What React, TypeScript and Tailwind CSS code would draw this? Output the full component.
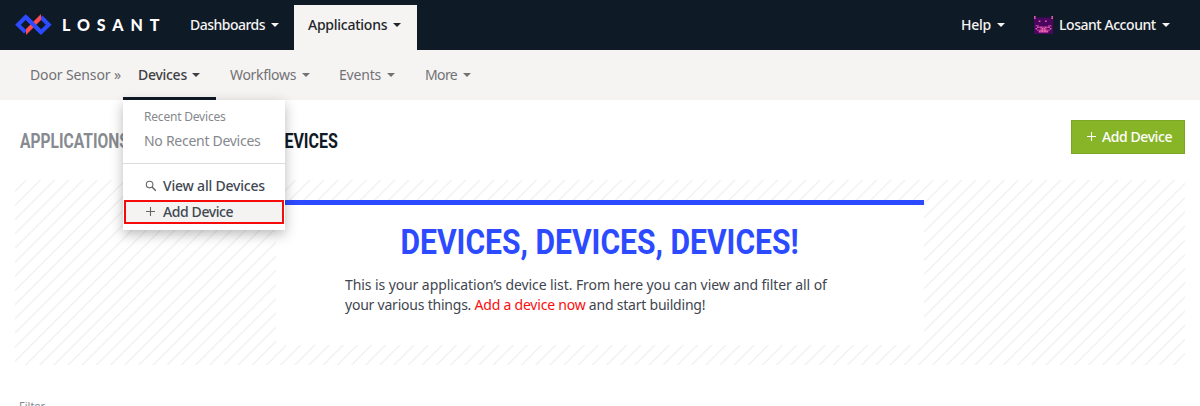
import type { ReactNode } from "react";

const PIXELS = [
  "p..........p",
  "pddddddddddp",
  "dddddddddddd",
  "dddpdddpdddd",
  "dddddddddddd",
  "dddddddddddd",
  "dmmddddddmmd",
  "ddpmpmmpmpdd",
  "dpddmppmddpd",
  "ddmmppppmmdd",
  "dddppppppddd",
  "dddddddddddd",
];

const FILL: Record<string, string> = { d: "#4b0660", p: "#ee62b0", m: "#b9389a" };

function Avatar() {
  return (
    <svg width="19" height="18" viewBox="0 0 12 12" preserveAspectRatio="none">
      <rect y="1" width="12" height="11" fill="#4b0660" />
      {PIXELS.flatMap((row, y) =>
        row.split("").map((c, x) =>
          FILL[c] && c !== "d" ? (
            <rect key={`${x}-${y}`} x={x} y={y} width="1" height="1" fill={FILL[c]} />
          ) : null,
        ),
      )}
    </svg>
  );
}

function Logo() {
  return (
    <svg width="37" height="22" viewBox="0 0 37 22" fill="none" strokeWidth="4">
      <path d="M10.5 18.2 L3 10.8 L10.7 3 L26 18.2 L33.7 10.8 L26 3" stroke="#2c4aff" />
      <path d="M26 0 V6 L11 21 V15 Z" fill="#ff4b4f" />
      <path d="M10.7 3 L26 18.2" stroke="#2c4aff" />
    </svg>
  );
}

function Caret({ className = "" }: { className?: string }) {
  return (
    <svg className={className} width="8" height="4" viewBox="0 0 8 4">
      <path d="M0 0H8L4 4Z" fill="currentColor" />
    </svg>
  );
}

function Plus({ className = "" }: { className?: string }) {
  return (
    <svg className={className} width="9" height="9" viewBox="0 0 9 9">
      <path d="M4.5 0V9M0 4.5H9" stroke="currentColor" strokeWidth="1.1" />
    </svg>
  );
}

function Search() {
  return (
    <svg width="12" height="12" viewBox="0 0 12 12" fill="none" stroke="#666" strokeWidth="1.1">
      <circle cx="4.6" cy="4.6" r="3.3" />
      <path d="M7 7L10.8 10.8" strokeWidth="1.5" />
    </svg>
  );
}

function Item({ className, children }: { className: string; children: ReactNode }) {
  return <div className={`flex shrink-0 items-center whitespace-nowrap ${className}`}>{children}</div>;
}

export default function App() {
  return (
    <div className="relative h-[406px] w-[1200px] overflow-hidden bg-white font-['Noto_Sans',sans-serif] text-[14px] text-[#3f4650]">
      <header className="flex h-[50px] bg-[#0f1a27] font-medium text-[#f5f4f2]">
        <div className="flex w-[190px] shrink-0 items-center pl-[15px]">
          <Logo />
          <span className="ml-[10px] font-['Lato',sans-serif] text-[16px] font-black tracking-[6.9px] text-white">LOSANT</span>
        </div>
        <Item className="w-[104px] pb-px">
          <span className="tracking-[-0.52px]">Dashboards</span>
          <Caret className="ml-[6px]" />
        </Item>
        <div className="mt-[5px] flex w-[123px] shrink-0 items-center bg-[#f5f4f2] pb-[6px] pl-[14px] text-[#23252b]">
          <span className="tracking-[-0.25px]">Applications</span>
          <Caret className="ml-[6px]" />
        </div>
        <Item className="ml-auto w-[73px] pb-px">
          <span className="tracking-[-0.3px]">Help</span>
          <Caret className="ml-[6px]" />
        </Item>
        <Item className="w-[166px] pb-px">
          <Avatar />
          <span className="ml-[6px] tracking-[-0.45px]">Losant Account</span>
          <Caret className="ml-[6px]" />
        </Item>
      </header>

      <nav className="flex h-[50px] bg-[#f5f4f2] pl-[30px] text-[#727276]">
        <Item className="w-[93px] pb-px tracking-[-0.12px]">Door Sensor »</Item>
        <div className="relative flex w-[93px] shrink-0 items-center border-b-[3px] border-[#0f1a27] pt-[2px] pl-[15px] font-medium text-[#3f4045]">
          <span className="tracking-[-0.28px]">Devices</span>
          <Caret className="ml-[5px]" />
          <div className="absolute top-[50px] left-0 z-10 h-[130px] w-[162px] bg-white font-normal shadow-[0_4px_12px_rgba(0,0,0,0.28)]">
            <div className="h-[64px] border-b border-[#dcdcdc] pl-[21px] text-[#85888d]">
              <div className="pt-[8px] text-[12px] leading-[17px] tracking-[-0.2px]">Recent Devices</div>
              <div className="pt-[6px] leading-[20px] tracking-[-0.28px]">No Recent Devices</div>
            </div>
            <div className="mt-[10px] flex h-[26px] items-center pb-[3px] pl-[22px] font-medium text-[#414853]">
              <Search />
              <span className="ml-[6px] tracking-[-0.2px]">View all Devices</span>
            </div>
            <div className="ml-px flex h-[24px] w-[160px] items-center border-[2px] border-[#f60b0b] bg-[#f4f3f2] pb-px pl-[20px] font-medium text-[#414853]">
              <Plus className="text-[#666]" />
              <span className="ml-[8px] tracking-[-0.4px]">Add Device</span>
            </div>
          </div>
        </div>
        <Item className="w-[108px] pb-px pl-[14px]">
          <span className="tracking-[-0.3px]">Workflows</span>
          <Caret className="ml-[6px]" />
        </Item>
        <Item className="w-[86px] pb-px pl-[15px]">
          <span className="tracking-[-0.2px]">Events</span>
          <Caret className="ml-[6px]" />
        </Item>
        <Item className="pb-px pl-[15px]">
          <span className="tracking-[-0.6px]">More</span>
          <Caret className="ml-[6px]" />
        </Item>
      </nav>

      <div className="flex h-[80px] items-start pr-[15px] pl-[20px]">
        <h1 className="mt-[30px] flex font-['Roboto',sans-serif] text-[19.5px] leading-[24px] font-bold whitespace-nowrap">
          <span className="w-[254px] origin-left scale-x-[0.8] text-[#878b91]">APPLICATIONS</span>
          <span className="origin-left scale-x-[0.82] text-[#0f1a27]">DEVICES</span>
        </h1>
        <button className="mt-[20px] ml-auto flex h-[34px] w-[114px] items-center border border-[#7da624] bg-[#88b527] pb-px pl-[15px] font-medium text-white">
          <Plus />
          <span className="ml-[6px] tracking-[-0.42px] whitespace-nowrap">Add Device</span>
        </button>
      </div>

      <section className="mx-[15px] h-[185px] bg-[repeating-linear-gradient(135deg,#ffffff_0px,#ffffff_6.9px,#f4f3f2_7.5px,#f4f3f2_8.5px,#ffffff_9.1px,#ffffff_10.022px)] pt-[20px]">
        <div className="ml-[261px] h-[145px] w-[648px] border-t-[5px] border-[#2c4aff] bg-white px-[69px]">
          <h2 className="flex justify-center pt-[18px] font-['Roboto',sans-serif] text-[35px] leading-[40px] font-bold whitespace-nowrap text-[#2c4aff]">
            <span className="scale-x-[0.86]">DEVICES, DEVICES, DEVICES!</span>
          </h2>
          <p className="mt-[12px] flex flex-col leading-[20px] whitespace-nowrap">
            <span className="tracking-[-0.09px]">This is your application’s device list. From here you can view and filter all of</span>
            <span className="tracking-[-0.22px]">
              your various things. <a className="text-[#fb0d0d]">Add a device now</a> and start building!
            </span>
          </p>
        </div>
      </section>
      <div className="mt-[33px] ml-[19px] text-[11px] leading-[15px] text-[#85888d]">Filter</div>
    </div>
  );
}
